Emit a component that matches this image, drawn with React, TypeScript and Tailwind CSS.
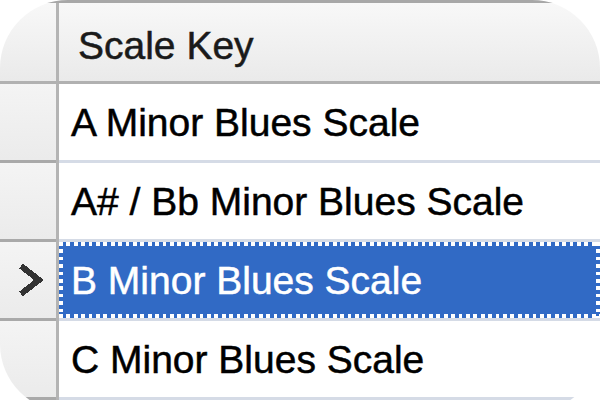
const rows = [
  "A Minor Blues Scale",
  "A# / Bb Minor Blues Scale",
  "B Minor Blues Scale",
  "C Minor Blues Scale",
];

const selectedIndex = 2;

function Dots({ side }: { side: "top" | "bottom" | "left" | "right" }) {
  if (side === "top" || side === "bottom") {
    return (
      <div
        className={
          "absolute left-0 right-0 h-[4px] bg-[repeating-linear-gradient(90deg,#ffffff_0_3.7px,transparent_3.7px_7.4px)] " +
          (side === "top" ? "top-0" : "bottom-0")
        }
      />
    );
  }
  return (
    <div
      className={
        "absolute top-0 bottom-0 w-[4px] bg-[repeating-linear-gradient(180deg,#ffffff_0_3.7px,transparent_3.7px_7.4px)] " +
        (side === "left" ? "left-0" : "right-0")
      }
    />
  );
}

function RowArrow() {
  return (
    <svg width="30" height="36" viewBox="0 0 30 36" className="ml-[16px]" shapeRendering="crispEdges">
      <polyline
        points="5,4 23,18 5,32"
        fill="none"
        stroke="#333333"
        strokeWidth="6"
        strokeLinejoin="miter"
      />
    </svg>
  );
}

export default function App() {
  return (
    <div className="w-[600px] h-[412px] overflow-hidden rounded-[68px] bg-white font-['Liberation_Sans',Arial,sans-serif] text-[39px] leading-none [-webkit-text-stroke:0.5px_currentColor]">
      <div className="h-[3px] bg-[#a8a8a8]" />

      {/* column header */}
      <div className="grid grid-cols-[56px_3px_1fr] h-[81px] border-b-[3px] border-[#b1b1b1] bg-gradient-to-b from-[#f8f8f8] to-[#eaeaea]">
        <div />
        <div className="bg-[#b4b4b4]" />
        <div className="flex items-center pt-[6px] pl-[19px] text-[#1a1a1a]">Scale Key</div>
      </div>

      {rows.map((label, i) => {
        const selected = i === selectedIndex;
        return (
          <div key={label} className="grid grid-cols-[56px_3px_1fr] h-[79px]">
            <div className="flex items-center border-b-[3px] border-[#a9a9a9] bg-gradient-to-b from-[#f4f4f4] to-[#ebebeb]">
              {selected && <RowArrow />}
            </div>
            <div className="bg-[#b4b4b4]" />
            <div className="border-b-[3px] border-[#d5dbe6]">
              {selected ? (
                <div className="relative flex items-center h-full bg-[#316ac5] pl-[12px] text-white">
                  <Dots side="top" />
                  <Dots side="bottom" />
                  <Dots side="left" />
                  <Dots side="right" />
                  {label}
                </div>
              ) : (
                <div className="flex items-center h-full pl-[12px] text-black">{label}</div>
              )}
            </div>
          </div>
        );
      })}
    </div>
  );
}
